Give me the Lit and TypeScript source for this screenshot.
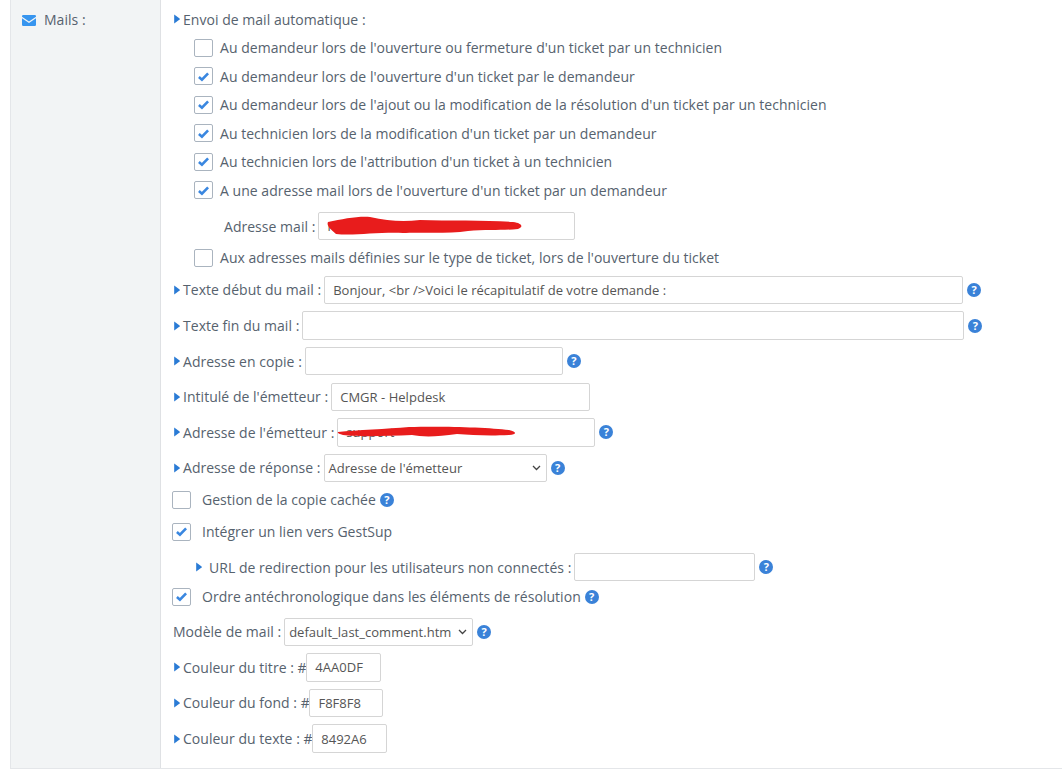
import {LitElement, html, css, svg} from 'lit';
import {customElement} from 'lit/decorators.js';

const caret = html`<svg class="caret" width="6" height="10" viewBox="0 0 6 10"><path d="M0.2 0.4 L5.6 4.4 Q6 5 5.6 5.6 L0.2 9.6 Z" fill="#2a7bd5"/></svg>`;
const help = html`<span class="help">?</span>`;

const checkbox = (on: boolean) => html`<span class="box">${on
  ? html`<svg width="13" height="11" viewBox="0 0 14 12"><path d="M2 6.5 L5.3 9.5 L12 2.5" fill="none" stroke="#3a87e0" stroke-width="2.8"/></svg>`
  : ''}</span>`;

// red marker blobs hiding the addresses in the reference
const scribble = (d: string, w: number) => html`<svg class="scribble" width=${w} height="28" viewBox="0 0 ${w} 28">${svg`<path d=${d} fill="#e81c1c"/>`}</svg>`;

@customElement('app-root')
export class AppRoot extends LitElement {
  static styles = css`
    :host {
      display: block;
      height: 770px;
      overflow: hidden;
      font-family: "Open Sans", sans-serif;
      font-size: 14px;
      letter-spacing: 0.03px;
      color: #56626e;
      background: #fff;
    }
    .panel {
      display: flex;
      margin-left: 10px;
      height: 769px;
      border-bottom: 1px solid #e4e6e9;
      box-sizing: border-box;
    }
    .side {
      width: 151px;
      box-sizing: border-box;
      background: #f2f4f5;
      border-left: 1px solid #e4e6e9;
      border-right: 1px solid #dfe1e4;
      padding: 11px 0 0 11px;
    }
    .side-line {
      display: flex;
      align-items: center;
      gap: 8px;
      line-height: 18px;
    }
    .main {
      flex: 1;
      padding: 5px 0 0 12px;
    }
    .row {
      display: flex;
      align-items: center;
      white-space: pre;
    }
    .h28 { height: 28.5px; }
    .h32 { height: 32px; }
    .h35 { height: 35.6px; }
    .sub { padding-left: 21px; }
    .mail-row { padding: 4px 0 0 51px; height: 35.2px; }
    .gestion-row { margin-top: -2px; }
    .url-row { margin-top: 1.5px; padding-left: 22px; }
    .url-row .caret { margin-right: 7px; }
    .ordre-row { margin-top: -2.4px; }
    .model-row { margin-top: 3px; }
    .caret { margin: 0 3px 0 1px; flex: none; }
    .box {
      flex: none;
      box-sizing: border-box;
      width: 19px;
      height: 18px;
      border: 1px solid #aab4bf;
      border-radius: 2px;
      background: #fff;
      margin-right: 7px;
      display: flex;
      align-items: center;
      justify-content: center;
    }
    .big-gap .box { margin: 0 11px 0 -1px; }
    .field {
      position: relative;
      box-sizing: border-box;
      height: 28.5px;
      margin-left: 3px;
      border: 1px solid #d5d5d5;
      border-radius: 2px;
      background: #fff;
      padding: 0 8px;
      display: flex;
      align-items: center;
      font-size: 13px;
      color: #555;
      flex: none;
    }
    .color .field { margin-left: -0.4px; }
    .select { padding: 0 4px; justify-content: space-between; }
    .chev { margin-right: 1px; }
    .help {
      flex: none;
      width: 14px;
      height: 14px;
      margin-left: 4px;
      border-radius: 50%;
      background: #3a82d8;
      color: #fff;
      font: bold 11px/14px "Open Sans", sans-serif;
      text-align: center;
    }
    .field + .help { margin-left: 4px; }
    .scribble { position: absolute; left: -1px; top: -1px; }
  `;

  field(width: number, value = '', extra: unknown = '') {
    return html`<span class="field" style="width:${width}px">${value}${extra}</span>`;
  }

  select(width: number, value: string) {
    return html`<span class="field select" style="width:${width}px">${value}<svg class="chev" width="9" height="6" viewBox="0 0 9 6"><path d="M1 1 L4.5 4.5 L8 1" fill="none" stroke="#444" stroke-width="1.3"/></svg></span>`;
  }

  check(on: boolean, label: string) {
    return html`<div class="row h28 sub">${checkbox(on)}${label}</div>`;
  }

  render() {
    return html`
      <div class="panel">
        <div class="side">
          <div class="side-line">
            <svg width="14" height="11" viewBox="0 0 14 11"><path d="M0 1.2 Q0 0 1.2 0 H12.8 Q14 0 14 1.2 V1.8 L7 6.6 L0 1.8 Z M0 3.2 L7 8 L14 3.2 V9.8 Q14 11 12.8 11 H1.2 Q0 11 0 9.8 Z" fill="#3795ef"/></svg>
            <span>Mails :</span>
          </div>
        </div>
        <div class="main">
          <div class="row h28">${caret}Envoi de mail automatique :</div>
          ${this.check(false, "Au demandeur lors de l'ouverture ou fermeture d'un ticket par un technicien")}
          ${this.check(true, "Au demandeur lors de l'ouverture d'un ticket par le demandeur")}
          ${this.check(true, "Au demandeur lors de l'ajout ou la modification de la résolution d'un ticket par un technicien")}
          ${this.check(true, "Au technicien lors de la modification d'un ticket par un demandeur")}
          ${this.check(true, "Au technicien lors de l'attribution d'un ticket à un technicien")}
          ${this.check(true, "A une adresse mail lors de l'ouverture d'un ticket par un demandeur")}
          <div class="row mail-row">Adresse mail :${this.field(257, 'm', scribble('M10 10 C25 7 40 4 52 5 C70 9 85 10 102 8 C130 9 170 8 195 10 C204 11 206 15 200 17 C180 19 165 17 150 19 C130 22 100 20 85 21 C60 20 35 24 18 22 C14 18 8 14 10 10 Z', 257))}</div>
          ${this.check(false, "Aux adresses mails définies sur le type de ticket, lors de l'ouverture du ticket")}
          <div class="row h35">${caret}Texte début du mail :${this.field(639, 'Bonjour, <br />Voici le récapitulatif de votre demande :')}${help}</div>
          <div class="row h35">${caret}Texte fin du mail :${this.field(662)}${help}</div>
          <div class="row h35">${caret}Adresse en copie :${this.field(258)}${help}</div>
          <div class="row h35">${caret}Intitulé de l'émetteur :${this.field(259, 'CMGR - Helpdesk')}</div>
          <div class="row h35">${caret}Adresse de l'émetteur :${this.field(258, 'support', scribble('M1 14 C20 12 50 11 72 9 C100 8 150 9 172 12 C180 14 180 16 172 17 C150 18 135 17 120 16 C100 19 85 19 75 17 C50 18 20 19 6 17 C2 16 0 15 1 14 Z', 258))}${help}</div>
          <div class="row h35">${caret}Adresse de réponse :${this.select(223, "Adresse de l'émetteur")}${help}</div>
          <div class="row h32 big-gap gestion-row">${checkbox(false)}Gestion de la copie cachée${help}</div>
          <div class="row h32 big-gap">${checkbox(true)}Intégrer un lien vers GestSup</div>
          <div class="row h35 url-row">${caret}URL de redirection pour les utilisateurs non connectés :${this.field(181)}${help}</div>
          <div class="row h28 big-gap ordre-row">${checkbox(true)}Ordre antéchronologique dans les éléments de résolution${help}</div>
          <div class="row h35 model-row">Modèle de mail :${this.select(189, 'default_last_comment.htm')}${help}</div>
          <div class="row h35 color">${caret}Couleur du titre : #${this.field(75, '4AA0DF')}</div>
          <div class="row h35 color">${caret}Couleur du fond : #${this.field(74, 'F8F8F8')}</div>
          <div class="row h35 color">${caret}Couleur du texte : #${this.field(75, '8492A6')}</div>
        </div>
      </div>
    `;
  }
}
